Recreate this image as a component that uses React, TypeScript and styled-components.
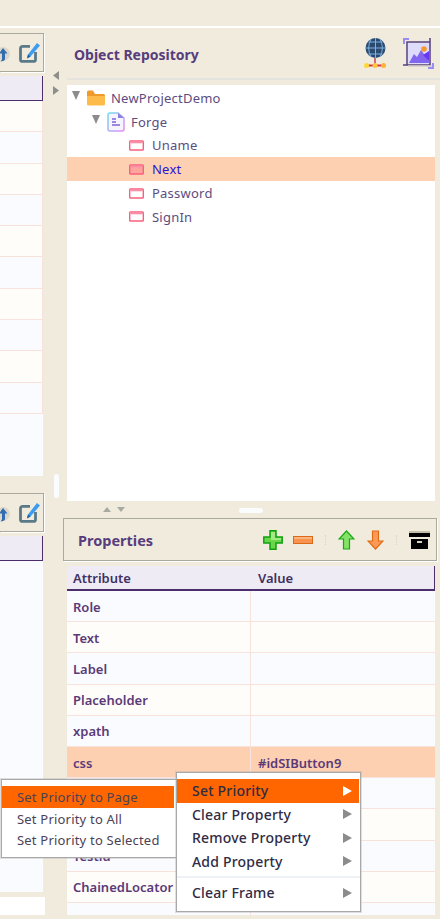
import React from "react";
import styled, {createGlobalStyle} from "styled-components";

const GlobalStyle = createGlobalStyle`
  html, body {
    margin: 0;
    padding: 0;
    background: #f1ebde;
  }

  * {
    box-sizing: border-box;
  }
`;

const Page = styled.div`
  position: relative;
  width: 440px;
  height: 919px;
  overflow: hidden;
  background: #f1ebde;
  font-family: "Noto Sans", "Open Sans", sans-serif;
`;

const TopBar = styled.div`
  height: 28px;
  border-bottom: 2px solid;
  border-image: linear-gradient(#a9a99c 50%, #ffffff 50%) 1;
`;

const Main = styled.div`
  display: grid;
  grid-template-columns: 44px 23px 368px;
  height: 887px;
`;

const LeftColumn = styled.div`
  display: flex;
  flex-direction: column;
  min-width: 0;
`;

const LeftPanel = styled.section<{$height: number; $top: number}>`
  height: ${p => p.$height}px;
  margin-top: ${p => p.$top}px;
  flex: none;
`;

const LeftToolbar = styled.div`
  height: 39px;
  display: flex;
  justify-content: flex-end;
  align-items: center;
  gap: 9px;
  padding-right: 3px;
  border: 1px solid #a9a99c;
  border-left: 0;
  box-shadow: 1px 1px 0 #fff;
  overflow: hidden;
`;

const LeftTable = styled.div`
  margin-top: 4px;
  height: calc(100% - 43px);
  width: 43px;
  background: #fafbfe;
  overflow: hidden;
`;

const LeftHead = styled.div`
  height: 25px;
  background: #efebf5;
  border-right: 1px solid #4b2e6b;
  border-bottom: 1px solid #4b2e6b;
`;

const LeftRow = styled.div<{$odd: boolean}>`
  height: 31.3px;
  background: ${p => (p.$odd ? "#fffdf9" : "#fafbfe")};
  border-bottom: 1px solid #f8e3dc;
  border-right: 1px solid #f8e3dc;
`;

const LeftFoot = styled.div`
  flex: 1;
  margin-top: 5px;
  width: 45px;
  background: #fff;
`;

const Gutter = styled.div`
  display: flex;
  flex-direction: column;
  align-items: flex-start;
  padding: 43px 0 0 9px;
`;

const GutterArrow = styled.svg`
  display: block;
  width: 6px;
  height: 9px;
  margin-bottom: 6px;
`;

const GutterHandle = styled.div`
  width: 5px;
  height: 24px;
  margin: 373px 0 0 1px;
  border-radius: 3px;
  background: #fbfcfd;
`;

const RightColumn = styled.div`
  display: flex;
  flex-direction: column;
  min-width: 0;
  min-height: 0;
`;

const RepoHeader = styled.header`
  height: 52px;
  display: flex;
  align-items: center;
  justify-content: space-between;
  padding: 2px 6px 0 7px;
  border-bottom: 2px solid #e5e3dd;
  margin-right: -5px;
`;

const PanelTitle = styled.h2<{$size: number}>`
  margin: 0;
  font-size: ${p => p.$size}px;
  font-weight: 700;
  color: #573d7c;
`;

const HeaderIcons = styled.div`
  display: flex;
  align-items: center;
  gap: 16px;
  margin-top: -2px;
`;

const Tree = styled.div`
  height: 416px;
  margin-top: 5px;
  padding-top: 1px;
  background: #fff;
`;

const TreeRow = styled.div<{$selected?: boolean; $indent: number}>`
  height: 23.8px;
  display: flex;
  align-items: center;
  padding-left: ${p => p.$indent}px;
  background: ${p => (p.$selected ? "#fdd0b1" : "transparent")};
  color: ${p => (p.$selected ? "#2a14d8" : "#5d4c80")};
  font-size: 13px;
  letter-spacing: 0.23px;
`;

const Twisty = styled.span`
  width: 0;
  height: 0;
  flex: none;
  margin-right: 7px;
  margin-top: -4px;
  border-left: 4.5px solid transparent;
  border-right: 4.5px solid transparent;
  border-top: 9px solid #8c8c8c;
`;

const TreeIcon = styled.svg<{$gap: number}>`
  flex: none;
  margin-right: ${p => p.$gap}px;
`;

const Splitter = styled.div`
  height: 17px;
  display: flex;
  align-items: center;
  padding-left: 36px;
`;

const SplitArrow = styled.span<{$up?: boolean}>`
  width: 0;
  height: 0;
  margin-right: 6px;
  border-left: 4.5px solid transparent;
  border-right: 4.5px solid transparent;
  ${p =>
    p.$up
      ? "border-bottom: 5px solid #aaaaa4;"
      : "border-top: 5px solid #aaaaa4;"}
`;

const SplitHandle = styled.div`
  width: 24px;
  height: 5px;
  margin-left: 108px;
  margin-top: 1px;
  border-radius: 3px;
  background: #fbfcfd;
`;

const PropsToolbar = styled.div`
  height: 43px;
  flex: none;
  margin: 0 -2px 0 -4px;
  display: flex;
  align-items: center;
  padding: 0 6px 0 14px;
  border: 1px solid #a9a99c;
  box-shadow: 1px 1px 0 #fff;
`;

const ToolSpacer = styled.div`
  flex: 1;
`;

const ToolSeparator = styled.span`
  width: 1px;
  height: 10px;
  flex: none;
  margin: 0 12px;
  border-left: 1px dotted #d8d6cc;
`;

const ToolIcon = styled.svg<{$gap?: number}>`
  display: block;
  flex: none;
  margin-left: ${p => p.$gap ?? 0}px;
`;

const PropsTable = styled.div`
  flex: 1;
  min-height: 0;
  overflow: hidden;
  margin-top: 5px;
  background: #fafbfe;
  display: grid;
  grid-template-columns: 184px 1fr;
  align-content: start;
`;

const HeadCell = styled.div<{$last?: boolean}>`
  height: 25px;
  display: flex;
  align-items: center;
  padding-left: ${p => (p.$last ? 7 : 6)}px;
  background: #efebf5;
  border-bottom: 2px solid #4b2e6b;
  border-right: ${p => (p.$last ? "1px solid #4b2e6b" : "0")};
  font-size: 13px;
  font-weight: 600;
  color: #3f3160;
`;

const Cell = styled.div<{$odd: boolean; $selected?: boolean; $value?: boolean}>`
  height: 31.2px;
  display: flex;
  align-items: center;
  padding: 1px 0 0 ${p => (p.$value ? 7 : 6)}px;
  background: ${p => (p.$selected ? "#fdd0b1" : p.$odd ? "#fffdf9" : "#fafbfe")};
  border-bottom: 1px solid #f8e3dc;
  border-right: ${p => (p.$value ? "0" : "1px solid #f8e3dc")};
  font-size: 13px;
  font-weight: 600;
  color: #5b3a78;
`;

const Menu = styled.div<{$left: number; $top: number; $width: number}>`
  position: absolute;
  left: ${p => p.$left}px;
  top: ${p => p.$top}px;
  width: ${p => p.$width}px;
  padding: 6px 0;
  background: #fff;
  border: 1px solid #a8a8a8;
  box-shadow: 0 0 0 1px rgba(168, 168, 168, 0.35);
`;

const SubItem = styled.div<{$active?: boolean}>`
  height: 21.7px;
  display: flex;
  align-items: center;
  padding-left: 15px;
  margin-right: 2px;
  background: ${p => (p.$active ? "#ff6600" : "transparent")};
  color: #4b4256;
  font-size: 13px;
  letter-spacing: 0.2px;
`;

const MainItem = styled.div<{$active?: boolean}>`
  height: 23.5px;
  display: flex;
  align-items: center;
  justify-content: space-between;
  padding: 0 7px 0 15px;
  margin-right: 1px;
  background: ${p => (p.$active ? "#ff6600" : "transparent")};
  color: #2f2b45;
  font-size: 14px;
  font-weight: 500;
  letter-spacing: 0.2px;
`;

const ItemArrow = styled.span<{$active?: boolean}>`
  width: 0;
  height: 0;
  border-top: 5.5px solid transparent;
  border-bottom: 5.5px solid transparent;
  border-left: 9px solid ${p => (p.$active ? "#fff" : "#8c8c8c")};
`;

const MenuSeparator = styled.div`
  height: 2px;
  margin: 3px 0;
  background: #eef1f5;
`;

const EditIcon = () => (
  <ToolIcon width="21" height="21" viewBox="0 0 21 21">
    <path d="M11 4.400H3.500a2 2 0 0 0-2 2v11a2 2 0 0 0 2 2h11a2 2 0 0 0 2-2V10" fill="none" stroke="#5a7a88" strokeWidth="2.800" />
    <path d="M8 16.500l1-4L18 1l3 2.500-9.500 11z" fill="#3b9cf0" />
    <path d="M8 16.500l1-4 2.500 2z" fill="#1d5f9c" />
  </ToolIcon>
);

const PartialIcon = () => (
  <ToolIcon width="15" height="22" viewBox="0 0 15 22">
    <ellipse cx="8" cy="12" rx="7" ry="7" fill="#dcd6ca" />
    <path d="M8 6l4.500 5.500H10V17c0 1.500-2 2.500-4.500 2.500l1.500-2V11.500H4z" fill="#2f6db0" />
  </ToolIcon>
);

const FolderIcon = () => (
  <TreeIcon $gap={6} width="18" height="16" viewBox="0 0 18 16">
    <path d="M0 2a1.500 1.500 0 0 1 1.500-1.500H6L8 4h8.500A1.500 1.500 0 0 1 18 5.500V7H0z" fill="#ef9a2c" />
    <path d="M0 6h18v8a1.500 1.500 0 0 1-1.500 1.500h-15A1.500 1.500 0 0 1 0 14z" fill="#fdbb4a" />
  </TreeIcon>
);

const PageIcon = () => (
  <TreeIcon $gap={6} width="18" height="20" viewBox="0 0 18 20">
    <defs>
      <linearGradient id="pageEdge" x1="0" y1="0" x2="1" y2="1">
        <stop offset="0" stopColor="#6fdcf2" />
        <stop offset="1" stopColor="#e68af5" />
      </linearGradient>
    </defs>
    <path d="M3 1h8l6 5v11a2 2 0 0 1-2 2H3a2 2 0 0 1-2-2V3a2 2 0 0 1 2-2z" fill="#f7f3ff" stroke="url(#pageEdge)" strokeWidth="1.500" />
    <path d="M11 1v5h6z" fill="#8d7fe0" />
    <path d="M5 7h4M5 10h4M5 13h8" stroke="#7c68d8" strokeWidth="1.300" fill="none" />
  </TreeIcon>
);

const ElementIcon = ({selected}: {selected?: boolean}) => (
  <TreeIcon $gap={8} width="15" height="11" viewBox="0 0 15 11">
    <rect x="0.700" y="1" width="13.600" height="9" rx="0.800" fill={selected ? "#fda49c" : "#fff"} stroke="#f9607f" strokeWidth="1.400" />
    <rect x="1.500" y="1.500" width="12" height="1.800" fill="#fb8fa8" />
  </TreeIcon>
);

const GlobeIcon = () => (
  <svg width="24" height="31" viewBox="0 0 24 31" style={{display: "block"}}>
    <path d="M12 20v7" stroke="#c9405a" strokeWidth="1.500" />
    <path d="M3 27.500h18" stroke="#d8344e" strokeWidth="2" />
    <circle cx="12.500" cy="10" r="10" fill="#2a4a70" />
    <path d="M2.500 10h20M12.500 0v20M5.500 4h14M5.500 16h14M8 1c-3 6-3 12 0 18M17 1c3 6 3 12 0 18" stroke="#7fb2e2" strokeWidth="1" fill="none" />
    <circle cx="3.500" cy="27.500" r="2.500" fill="#fcd73a" />
    <circle cx="12" cy="27.500" r="2.500" fill="#fcc83a" />
    <circle cx="20.500" cy="27.500" r="2.500" fill="#fdb23a" />
  </svg>
);

const ImageFrameIcon = () => (
  <svg width="31" height="31" viewBox="0 0 31 31" style={{display: "block"}}>
    <path d="M1 6V1h5M30 25v5h-5" fill="none" stroke="#9a8cf5" strokeWidth="2" />
    <rect x="5" y="5" width="22" height="21" fill="#dedcfb" />
    <path d="M6 25l5-9 3 3 4-7 8 11v2H6z" fill="#8267ee" />
    <path d="M20 17l6 6V13z" fill="#6a36f2" />
    <circle cx="21" cy="11" r="2.800" fill="#f7982f" />
    <path d="M4 4h23v23H4zM0 27h4M27 0v4" fill="none" stroke="#54407e" strokeWidth="1.500" />
    <path d="M5 28h24" stroke="#d5d0c8" strokeWidth="1.500" />
  </svg>
);

const PlusIcon = () => (
  <ToolIcon width="20" height="20" viewBox="0 0 20 20">
    <path d="M7 .8h6V7h6.200v6H13v6.200H7V13H.8V7H7z" fill="#69d749" stroke="#11a010" strokeWidth="1.500" />
    <path d="M8 2h4v6h6v2H8z" fill="#a4ea84" />
  </ToolIcon>
);

const MinusIcon = () => (
  <ToolIcon $gap={10} width="20" height="8" viewBox="0 0 20 8">
    <rect x="0.500" y="0.500" width="19" height="7" fill="#f9934d" stroke="#d96a1a" />
    <rect x="1" y="1" width="18" height="2" fill="#fdb47c" />
  </ToolIcon>
);

const UpIcon = () => (
  <ToolIcon width="17" height="20" viewBox="0 0 17 20">
    <path d="M8.500 1L16 9h-4.500v10h-6V9H1z" fill="#84e266" stroke="#18a814" strokeWidth="1.200" />
  </ToolIcon>
);

const DownIcon = () => (
  <ToolIcon $gap={12} width="17" height="20" viewBox="0 0 17 20">
    <path d="M8.500 19L16 11h-4.500V1h-6v10H1z" fill="#fb9a58" stroke="#e06a12" strokeWidth="1.200" />
  </ToolIcon>
);

const ArchiveIcon = () => (
  <ToolIcon width="21" height="18" viewBox="0 0 21 18">
    <rect x="0" y="0" width="21" height="2" fill="#c4bfa8" />
    <rect x="0" y="2" width="21" height="4" fill="#000" />
    <rect x="2" y="8" width="17" height="10" fill="#000" />
    <rect x="8" y="10" width="5" height="2" fill="#d8d4c4" />
  </ToolIcon>
);

const propertyRows = ["Role", "Text", "Label", "Placeholder", "xpath", "css", "", "", "Testid", "ChainedLocator", ""];

function LeftPane({height, top, rows}: {height: number; top: number; rows: number}) {
  return (
    <LeftPanel $height={height} $top={top}>
      <LeftToolbar>
        <PartialIcon />
        <EditIcon />
      </LeftToolbar>
      <LeftTable>
        <LeftHead />
        {Array.from({length: rows}, (_, i) => (
          <LeftRow key={i} $odd={i % 2 === 0} />
        ))}
      </LeftTable>
    </LeftPanel>
  );
}

export default function App() {
  return (
    <Page>
      <GlobalStyle />
      <TopBar />
      <Main>
        <LeftColumn>
          <LeftPane height={443} top={5} rows={10} />
          <LeftPane height={399} top={17} rows={0} />
          <LeftFoot />
        </LeftColumn>
        <Gutter>
          <GutterArrow viewBox="0 0 6 9">
            <path d="M6 0v9L0 4.500z" fill="#8f8f8a" />
          </GutterArrow>
          <GutterArrow viewBox="0 0 6 9">
            <path d="M0 0v9l6-4.500z" fill="#8f8f8a" />
          </GutterArrow>
          <GutterHandle />
        </Gutter>
        <RightColumn>
          <RepoHeader>
            <PanelTitle $size={14}>Object Repository</PanelTitle>
            <HeaderIcons>
              <GlobeIcon />
              <ImageFrameIcon />
            </HeaderIcons>
          </RepoHeader>
          <Tree>
            <TreeRow $indent={5}>
              <Twisty />
              <FolderIcon />
              NewProjectDemo
            </TreeRow>
            <TreeRow $indent={25}>
              <Twisty />
              <PageIcon />
              Forge
            </TreeRow>
            <TreeRow $indent={62}>
              <ElementIcon />
              Uname
            </TreeRow>
            <TreeRow $indent={62} $selected>
              <ElementIcon selected />
              Next
            </TreeRow>
            <TreeRow $indent={62}>
              <ElementIcon />
              Password
            </TreeRow>
            <TreeRow $indent={62}>
              <ElementIcon />
              SignIn
            </TreeRow>
          </Tree>
          <Splitter>
            <SplitArrow $up />
            <SplitArrow />
            <SplitHandle />
          </Splitter>
          <PropsToolbar>
            <PanelTitle $size={14.5}>Properties</PanelTitle>
            <ToolSpacer />
            <PlusIcon />
            <MinusIcon />
            <ToolSeparator />
            <UpIcon />
            <DownIcon />
            <ToolSeparator />
            <ArchiveIcon />
          </PropsToolbar>
          <PropsTable>
            <HeadCell>Attribute</HeadCell>
            <HeadCell $last>Value</HeadCell>
            {propertyRows.map((name, i) => (
              <React.Fragment key={i}>
                <Cell $odd={i % 2 === 1} $selected={name === "css"}>
                  {name}
                </Cell>
                <Cell $odd={i % 2 === 1} $selected={name === "css"} $value>
                  {name === "css" ? "#idSIButton9" : ""}
                </Cell>
              </React.Fragment>
            ))}
          </PropsTable>
        </RightColumn>
      </Main>
      <Menu $left={1} $top={779} $width={176}>
        <SubItem $active>Set Priority to Page</SubItem>
        <SubItem>Set Priority to All</SubItem>
        <SubItem>Set Priority to Selected</SubItem>
      </Menu>
      <Menu $left={176} $top={772} $width={185}>
        <MainItem $active>
          Set Priority
          <ItemArrow $active />
        </MainItem>
        <MainItem>
          Clear Property
          <ItemArrow />
        </MainItem>
        <MainItem>
          Remove Property
          <ItemArrow />
        </MainItem>
        <MainItem>
          Add Property
          <ItemArrow />
        </MainItem>
        <MenuSeparator />
        <MainItem>
          Clear Frame
          <ItemArrow />
        </MainItem>
      </Menu>
    </Page>
  );
}
